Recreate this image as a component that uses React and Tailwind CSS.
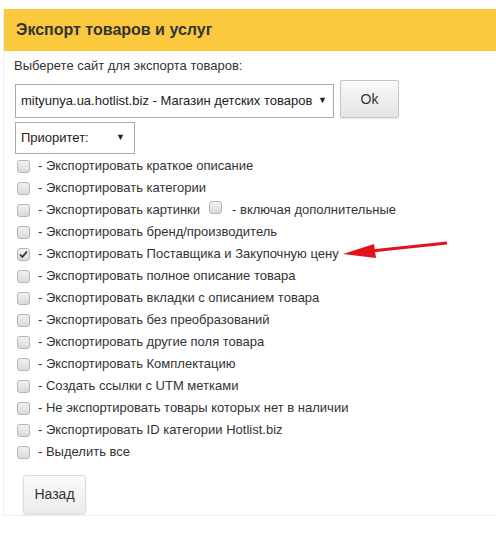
import React from 'react';

const options = [
  { label: '- Экспортировать краткое описание' },
  { label: '- Экспортировать категории' },
  { label: '- Экспортировать картинки', extra: '- включая дополнительные' },
  { label: '- Экспортировать бренд/производитель' },
  { label: '- Экспортировать Поставщика и Закупочную цену', checked: true, arrow: true },
  { label: '- Экспортировать полное описание товара' },
  { label: '- Экспортировать вкладки с описанием товара' },
  { label: '- Экспортировать без преобразований' },
  { label: '- Экспортировать другие поля товара' },
  { label: '- Экспортировать Комплектацию' },
  { label: '- Создать ссылки с UTM метками' },
  { label: '- Не экспортировать товары которых нет в наличии' },
  { label: '- Экспортировать ID категории Hotlist.biz' },
  { label: '- Выделить все' },
];

function Box({ checked }) {
  return (
    <span className="relative inline-block w-[13px] h-[13px] rounded-[3px] border border-[#b5b5b5] bg-gradient-to-b from-[#f2f2f2] to-[#d9d9d9] shrink-0">
      {checked && (
        <svg viewBox="0 0 13 13" className="absolute -left-px -top-px w-[13px] h-[13px]">
          <path d="M3 6.5 L5.3 9 L10 3.5" fill="none" stroke="#333" strokeWidth="1.8" />
        </svg>
      )}
    </span>
  );
}

function Arrow() {
  return (
    <svg width="110" height="22" viewBox="0 0 110 22" className="absolute left-[326px] top-[-3px]">
      <line x1="28" y1="11" x2="104" y2="3" stroke="#e3121b" strokeWidth="3" />
      <polygon points="0,14 31,4 33,18" fill="#e3121b" />
    </svg>
  );
}

export default function App() {
  return (
    <div className="w-[496px] h-[548px] bg-white pt-[9px] pl-[3px] font-['Liberation_Sans',Arial,sans-serif] text-[#333]">
      <div className="border-l border-b border-[#eef0f2] h-[507px]">
        <div className="bg-[#fac93e] h-[42px] flex items-center pl-[12px] text-[16px] font-bold text-[#333]">
          Экспорт товаров и услуг
        </div>
        <div className="pl-[10px] pt-[7px] text-[13px]">
          <div className="leading-[16px]">Выберете сайт для экспорта товаров:</div>
          <div className="flex items-end gap-[6px] mt-[6px] pl-[1px]">
            <div className="w-[319px] h-[34px] border border-[#a9a9a9] flex items-center justify-between pl-[5px] pr-[6px] text-[13px] text-[#222]">
              <span>mityunya.ua.hotlist.biz - Магазин детских товаров</span>
              <span className="text-[9px]">▼</span>
            </div>
            <button className="w-[59px] h-[38px] border border-[#c5c5c5] rounded-[2px] bg-gradient-to-b from-[#fafafa] to-[#e4e4e4] text-[14px] text-[#333] shadow-[0_1px_1px_rgba(0,0,0,0.08)]">
              Ok
            </button>
          </div>
          <div className="mt-[4px] ml-[1px] w-[120px] h-[32px] border border-[#a9a9a9] flex items-center justify-between pl-[5px] pr-[9px] text-[13px] text-[#222]">
            <span>Приоритет:</span>
            <span className="text-[9px]">▼</span>
          </div>
          <div className="mt-[1px] pl-[3px]">
            {options.map((o, i) => (
              <div key={i} className="relative h-[22px] flex items-center gap-[8px]">
                <Box checked={o.checked} />
                <span>{o.label}</span>
                {o.extra && (
                  <>
                    <span className="ml-[1px]"><Box /></span>
                    <span className="ml-[2px]">{o.extra}</span>
                  </>
                )}
                {o.arrow && <Arrow />}
              </div>
            ))}
          </div>
          <button className="mt-[12px] ml-[9px] w-[63px] h-[39px] border border-[#dcdcdc] rounded-[3px] bg-gradient-to-b from-[#fbfbfb] to-[#ececec] text-[14px] text-[#333] shadow-[0_1px_2px_rgba(0,0,0,0.1)]">
            Назад
          </button>
        </div>
      </div>
    </div>
  );
}
